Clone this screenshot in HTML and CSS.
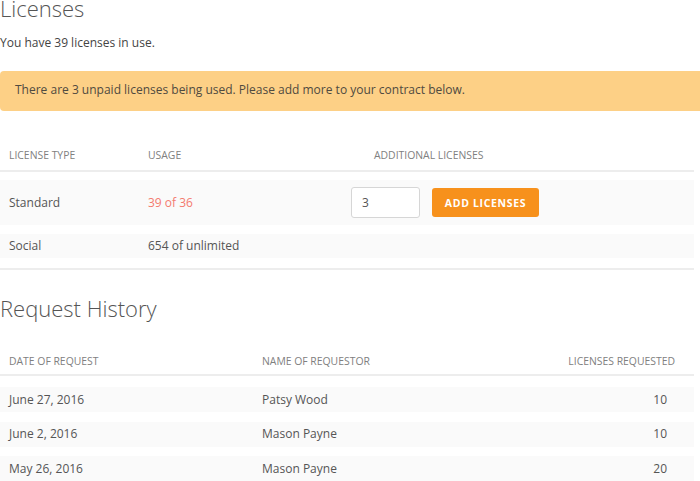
FILE: index.html
```html
<!DOCTYPE html>
<html>
<head>
<meta charset="utf-8">
<link rel="stylesheet" href="styles.css">
</head>
<body>
<div class="page">
  <h1 class="title">Licenses</h1>
  <p class="summary">You have 39 licenses in use.</p>
  <div class="alert">There are 3 unpaid licenses being used. Please add more to your contract below.</div>

  <div class="table lic">
    <div class="thead">
      <div class="c1">License Type</div>
      <div class="c2">Usage</div>
      <div class="c3 c3h">Additional Licenses</div>
    </div>
    <div class="row tall">
      <div class="c1">Standard</div>
      <div class="c2 over">39 of 36</div>
      <div class="c3 actions">
        <input class="qty" type="text" value="3">
        <button class="btn">Add Licenses</button>
      </div>
    </div>
    <div class="row">
      <div class="c1">Social</div>
      <div class="c2">654 of unlimited</div>
      <div class="c3"></div>
    </div>
  </div>

  <h2 class="title sub">Request History</h2>

  <div class="table hist">
    <div class="thead">
      <div class="h1c">Date of Request</div>
      <div class="h2c">Name of Requestor</div>
      <div class="h3c hnum">Licenses Requested</div>
    </div>
    <div class="row">
      <div class="h1c">June 27, 2016</div>
      <div class="h2c">Patsy Wood</div>
      <div class="h3c num">10</div>
    </div>
    <div class="row">
      <div class="h1c">June 2, 2016</div>
      <div class="h2c">Mason Payne</div>
      <div class="h3c num">10</div>
    </div>
    <div class="row">
      <div class="h1c">May 26, 2016</div>
      <div class="h2c">Mason Payne</div>
      <div class="h3c num">20</div>
    </div>
  </div>
</div>
</body>
</html>
```

FILE: styles.css
```css
html, body {
  margin: 0;
  padding: 0;
  background: #ffffff;
}
body {
  font-family: "Open Sans", "Liberation Sans", sans-serif;
  font-size: 12px;
  line-height: 16px;
  color: #555555;
  overflow: hidden;
}
.page {
  margin-top: -5px;
  width: 700px;
}
.title {
  margin: 0;
  font-size: 22px;
  line-height: 26px;
  font-weight: 300;
  color: #555555;
}
.summary {
  margin: 14px 0 0 0;
  color: #444444;
}
.alert {
  margin-top: 20px;
  background: #fdd086;
  border-radius: 4px 0 0 4px;
  padding: 11px 15px 13px;
  color: #4f4a40;
}
.table {
  width: 694px;
}
.thead {
  display: flex;
  font-size: 10.4px;
  line-height: 14px;
  text-transform: uppercase;
  color: #808080;
  border-bottom: 2px solid #ededed;
}
.lic .thead {
  margin-top: 37px;
  padding-bottom: 8px;
}
.row {
  display: flex;
  align-items: center;
  background: #fafafa;
  height: 24px;
  margin-top: 9px;
}
.lic .row.tall {
  height: 45px;
  margin-top: 8px;
}
.lic {
  border-bottom: 2px solid #ededed;
  padding-bottom: 10px;
}
.c1 {
  width: 130px;
  padding-left: 9px;
}
.c2 {
  width: 194px;
  padding-left: 9px;
}
.c3 {
  flex: 1;
  padding-left: 9px;
}
.c3h {
  padding-left: 32px;
}
.over {
  color: #f47b6f;
}
.actions {
  display: flex;
  align-items: center;
}
.qty {
  box-sizing: border-box;
  width: 69px;
  height: 31px;
  border: 1px solid #d6d6d6;
  border-radius: 3px;
  background: #ffffff;
  padding: 0 0 0 10px;
  font-family: "Open Sans", "Liberation Sans", sans-serif;
  font-size: 12px;
  color: #555555;
  margin: 0;
}
.btn {
  box-sizing: border-box;
  margin: 0 0 0 12px;
  width: 107px;
  height: 29px;
  border: none;
  border-radius: 3px;
  background: #f7911c;
  color: #ffffff;
  font-family: "Open Sans", "Liberation Sans", sans-serif;
  font-size: 10.5px;
  font-weight: 700;
  letter-spacing: 0.65px;
  text-transform: uppercase;
  padding: 0;
}
.sub {
  margin-top: 25px;
}
.hist .thead {
  margin-top: 33px;
  padding-bottom: 6px;
}
.hist .row {
  height: 25px;
  margin-top: 9.5px;
}
.hist .thead + .row {
  margin-top: 11px;
}
.h1c {
  width: 244px;
  padding-left: 9px;
}
.h2c {
  width: 244px;
  padding-left: 9px;
}
.h3c {
  flex: 1;
  text-align: right;
}
.hnum {
  padding-right: 19px;
}
.num {
  padding-right: 27px;
}
```
